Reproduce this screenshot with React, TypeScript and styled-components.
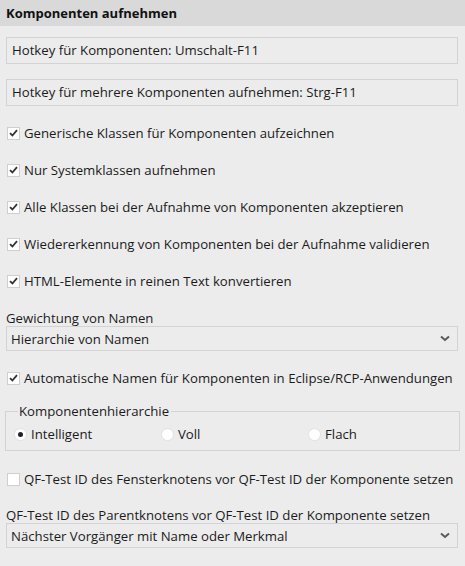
import React from 'react';
import styled, { createGlobalStyle } from 'styled-components';

const GlobalStyle = createGlobalStyle`
  html, body {
    margin: 0;
    padding: 0;
    background: #ececec;
  }
  body {
    font-family: 'Open Sans', 'Noto Sans', 'DejaVu Sans', sans-serif;
    font-size: 13.2px;
    color: #1b1b1b;
  }
`;

const Panel = styled.div`
  width: 465px;
  height: 566px;
  background: #ececec;
  overflow: hidden;
`;

const Header = styled.div`
  height: 26px;
  line-height: 26px;
  background: #d9d9d9;
  padding-left: 6px;
  font-weight: 700;
  font-size: 13px;
  color: #111;
`;

const Body = styled.div`
  display: flex;
  flex-direction: column;
  padding: 0 7px 0 6px;
`;

const InfoBox = styled.div<{ $top: number }>`
  margin-top: ${(p) => p.$top}px;
  height: 25px;
  line-height: 25px;
  border: 1px solid #d3d3d3;
  padding-left: 5px;
`;

const Row = styled.label<{ $top: number }>`
  margin-top: ${(p) => p.$top}px;
  height: 20px;
  display: flex;
  align-items: center;
  gap: 4px;
  padding-left: 1px;
  white-space: nowrap;
`;

const Box = styled.span`
  width: 11px;
  height: 11px;
  border: 1px solid #cfcfcf;
  background: #fff;
  display: flex;
  align-items: center;
  justify-content: center;
  flex: none;
`;

const Label = styled.div<{ $top: number }>`
  margin-top: ${(p) => p.$top}px;
  height: 16px;
  line-height: 16px;
  white-space: nowrap;
`;

const Select = styled.div`
  height: 23px;
  border: 1px solid #d3d3d3;
  display: flex;
  align-items: center;
  justify-content: space-between;
  padding: 0 7px 0 4px;
`;

const Group = styled.fieldset`
  margin: 15px -2px 0 -1px;
  padding: 4px 0 6px 9px;
  border: 1px solid #d3d3d3;
  min-width: 0;
`;

const Legend = styled.legend`
  padding: 0 2px 0 1px;
  margin-left: 3px;
  line-height: 17px;
`;

const RadioRow = styled.div`
  display: grid;
  grid-template-columns: 147px 147px 1fr;
  height: 20px;
`;

const Radio = styled.span`
  display: flex;
  align-items: center;
  gap: 5px;
`;

const Dot = styled.span<{ $on?: boolean }>`
  width: 11px;
  height: 11px;
  border-radius: 50%;
  background: #fff;
  box-shadow: 0 0 0 1px #e2e2e2;
  display: flex;
  align-items: center;
  justify-content: center;
  &::after {
    content: '';
    width: 5px;
    height: 5px;
    border-radius: 50%;
    background: ${(p) => (p.$on ? '#222' : 'transparent')};
  }
`;

const Check = () => (
  <svg width="9" height="8" viewBox="0 0 9 8">
    <path d="M1 4.2 L3.4 6.5 L8 1.2" fill="none" stroke="#333" strokeWidth="1.8" />
  </svg>
);

const Chevron = () => (
  <svg width="10" height="7" viewBox="0 0 10 7">
    <path d="M1 1.5 L5 5 L9 1.5" fill="none" stroke="#5a5a5a" strokeWidth="2" />
  </svg>
);

const CheckRow = ({ top, checked = true, children }: { top: number; checked?: boolean; children: React.ReactNode }) => (
  <Row $top={top}>
    <Box>{checked && <Check />}</Box>
    <span>{children}</span>
  </Row>
);

export default function App() {
  return (
    <Panel>
      <GlobalStyle />
      <Header>Komponenten aufnehmen</Header>
      <Body>
        <InfoBox $top={11}>Hotkey für Komponenten: Umschalt-F11</InfoBox>
        <InfoBox $top={15}>Hotkey für mehrere Komponenten aufnehmen: Strg-F11</InfoBox>
        <CheckRow top={17}>Generische Klassen für Komponenten aufzeichnen</CheckRow>
        <CheckRow top={17}>Nur Systemklassen aufnehmen</CheckRow>
        <CheckRow top={17}>Alle Klassen bei der Aufnahme von Komponenten akzeptieren</CheckRow>
        <CheckRow top={17}>Wiedererkennung von Komponenten bei der Aufnahme validieren</CheckRow>
        <CheckRow top={17}>HTML-Elemente in reinen Text konvertieren</CheckRow>
        <Label $top={19}>Gewichtung von Namen</Label>
        <Select>
          <span>Hierarchie von Namen</span>
          <Chevron />
        </Select>
        <CheckRow top={17}>Automatische Namen für Komponenten in Eclipse/RCP-Anwendungen</CheckRow>
        <Group>
          <Legend>Komponentenhierarchie</Legend>
          <RadioRow>
            <Radio><Dot $on />Intelligent</Radio>
            <Radio><Dot />Voll</Radio>
            <Radio><Dot />Flach</Radio>
          </RadioRow>
        </Group>
        <CheckRow top={18} checked={false}>QF-Test ID des Fensterknotens vor QF-Test ID der Komponente setzen</CheckRow>
        <Label $top={18}>QF-Test ID des Parentknotens vor QF-Test ID der Komponente setzen</Label>
        <Select>
          <span>Nächster Vorgänger mit Name oder Merkmal</span>
          <Chevron />
        </Select>
      </Body>
    </Panel>
  );
}
